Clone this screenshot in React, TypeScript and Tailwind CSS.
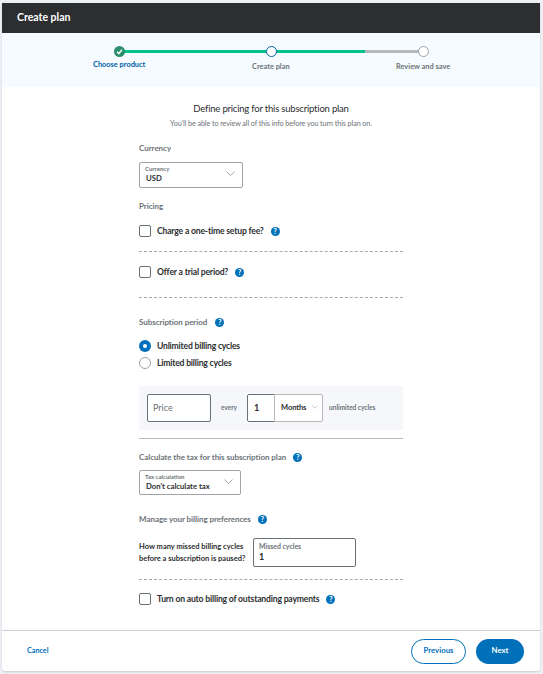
import React from 'react';

const font = "[font-family:Lato,'Noto_Sans',sans-serif]";

const Help = () => (
  <span className="inline-flex h-[9px] w-[9px] items-center justify-center rounded-full bg-[#0070ba] text-[7px] font-black leading-none text-white">?</span>
);

const Chevron = ({ className }: { className: string }) => (
  <svg className={className} viewBox="0 0 12 6" fill="none" stroke="#687173" strokeWidth="0.8">
    <path d="M0.5 0.5 L6 5.5 L11.5 0.5" />
  </svg>
);

const Checkbox = ({ label, className }: { label: string; className: string }) => (
  <div className={`flex items-center ${className}`}>
    <span className="h-3 w-3 rounded-[2px] border border-[#687173] bg-white" />
    <span className="ml-[6px] text-[8.6px] font-bold leading-3 tracking-[-0.18px] text-[#2c2e2f]">{label}</span>
    <span className="ml-[7px] flex"><Help /></span>
  </div>
);

const Dashed = ({ className }: { className: string }) => <div className={`border-t border-dashed border-[#a9a9a9] ${className}`} />;

const Label = ({ children, className }: { children: React.ReactNode; className: string }) => (
  <div className={`flex items-center text-[8px] font-bold leading-3 tracking-[-0.05px] text-[#6c7378] ${className}`}>{children}</div>
);

const SelectBox = ({ label, value, className }: { label: string; value: string; className: string }) => (
  <div className={`relative rounded-[2px] border border-[#9da3a6] bg-white pl-[5px] ${className}`}>
    <div className="mt-[1px] text-[6px] font-bold leading-[9px] text-[#6c7378]">{label}</div>
    <div className="pl-px text-[7.7px] font-bold leading-[11px] text-[#2c2e2f]">{value}</div>
    <Chevron className="absolute right-[7px] top-[8px] h-[5px] w-[9px]" />
  </div>
);

export default function App() {
  return (
    <div className={`h-[674px] w-[543px] overflow-hidden bg-[#eef0f6] pt-[3px] pl-[2px] ${font}`}>
      <div className="flex h-[668px] w-[538px] flex-col rounded-b-[3px] bg-white shadow-[0_1px_2px_rgba(0,0,0,0.15)]">
        <div className="flex h-[30px] items-center bg-[#2c2e2f] pl-[15px] text-[10.5px] font-bold text-white">Create plan</div>

        {/* Stepper */}
        <div className="h-[54px] bg-[#f5fbfe] pt-[13px]">
          <div className="relative ml-[71px] h-[12px] w-[350px]">
            <div className="absolute left-[46px] right-0 top-[4px] flex h-[3px] w-[304px]">
              <div className="w-[246px] bg-[#00c389]" />
              <div className="flex-1 bg-[#b5b7b8]" />
            </div>
            <span className="absolute left-[41px] top-0 flex h-[11px] w-[11px] items-center justify-center rounded-full bg-[#2a8f6c]">
              <svg className="h-[7px] w-[7px]" viewBox="0 0 10 10" fill="none" stroke="white" strokeWidth="2">
                <path d="M1.5 5.5 L4 8 L8.5 2.5" />
              </svg>
            </span>
            <span className="absolute left-[193px] top-0 h-[11px] w-[11px] rounded-full border-[1.5px] border-[#005ea6] bg-white" />
            <span className="absolute left-[345px] top-0 h-[11px] w-[11px] rounded-full border border-[#9da3a6] bg-white" />
          </div>
          <div className="relative h-[14px] text-[7.4px] font-bold leading-[11px]">
            <span className="absolute left-[91px] top-[1px] text-[#005ea6]">Choose product</span>
            <span className="absolute left-[250px] top-[3px] text-[#6c7378]">Create plan</span>
            <span className="absolute left-[394px] top-[3px] text-[#6c7378]">Review and save</span>
          </div>
        </div>

        <div className="flex-1">
          <div className="mt-[15px] text-center text-[9.5px] leading-[14px] tracking-[-0.2px] text-[#2c2e2f]">Define pricing for this subscription plan</div>
          <div className="mt-[2px] text-center text-[7.2px] leading-[11px] tracking-[-0.08px] text-[#6c7378]">You'll be able to review all of this info before you turn this plan on.</div>

          <div className="mx-auto w-[264px]">
            <Label className="mt-[13px]">Currency</Label>
            <SelectBox label="Currency" value="USD" className="mt-[8px] h-[26px] w-[104px]" />
            <Label className="mt-[12px]">Pricing</Label>
            <Checkbox label="Charge a one-time setup fee?" className="mt-[13px]" />
            <Dashed className="mt-[14px]" />
            <Checkbox label="Offer a trial period?" className="mt-[14px]" />
            <Dashed className="mt-[19px]" />

            <Label className="mt-[18px]">
              Subscription period
              <span className="ml-2 flex"><Help /></span>
            </Label>
            <div className="mt-[12px] flex h-[12px] items-center">
              <span className="flex h-3 w-3 items-center justify-center rounded-full bg-[#0070ba]">
                <span className="h-1 w-1 rounded-full bg-white" />
              </span>
              <span className="ml-[6px] text-[8.6px] font-bold tracking-[-0.2px] text-[#2c2e2f]">Unlimited billing cycles</span>
            </div>
            <div className="mt-[5px] flex h-[12px] items-center">
              <span className="h-3 w-3 rounded-full border border-[#9da3a6] bg-white" />
              <span className="ml-[6px] text-[8.6px] font-bold tracking-[-0.2px] text-[#2c2e2f]">Limited billing cycles</span>
            </div>

            <div className="mt-[17px] flex h-[44px] items-center bg-[#f5f7fa] pl-2">
              <div className="flex h-7 w-[64px] items-center rounded-[2px] border border-[#687173] bg-white pl-[5px] text-[9px] text-[#6c7378]">Price</div>
              <span className="ml-[10px] text-[6.5px] font-bold text-[#6c7378]">every</span>
              <div className="ml-[10px] flex h-7 w-[28px] items-center rounded-l-[2px] border border-[#687173] bg-white pl-[6px] text-[9px] font-bold text-[#2c2e2f]">1</div>
              <div className="relative -ml-px flex h-7 w-[49px] items-center rounded-r-[2px] border border-[#b5b7b8] bg-white pl-[6px] text-[7.5px] font-bold tracking-[-0.1px] text-[#2c2e2f]">
                Months
                <Chevron className="absolute right-[4px] top-[10px] h-[4px] w-[6px]" />
              </div>
              <span className="ml-[6px] text-[6.5px] font-bold text-[#6c7378]">unlimited cycles</span>
            </div>
            <div className="mt-[8px] border-t border-[#b5b7b8]" />

            <Label className="mt-[12px]">
              Calculate the tax for this subscription plan
              <span className="ml-[7px] flex"><Help /></span>
            </Label>
            <SelectBox label="Tax calculation" value="Don't calculate tax" className="mt-[7px] h-[25px] w-[102px]" />

            <Label className="mt-[18px]">
              Manage your billing preferences
              <span className="ml-[7px] flex"><Help /></span>
            </Label>
            <div className="mt-[13px] flex items-center">
              <div className="w-[114px] text-[7.5px] font-bold leading-3 text-[#2c2e2f]">
                How many missed billing cycles
                <br />
                before a subscription is paused?
              </div>
              <div className="h-[29px] w-[103px] rounded-[2px] border border-[#687173] bg-white pl-[5px]">
                <div className="mt-[2px] text-[6.9px] font-bold leading-[11px] text-[#6c7378]">Missed cycles</div>
                <div className="text-[9px] font-bold leading-[10px] text-[#2c2e2f]">1</div>
              </div>
            </div>
            <Dashed className="mt-[12px]" />
            <Checkbox label="Turn on auto billing of outstanding payments" className="mt-[13px]" />
          </div>
        </div>

        {/* Footer */}
        <div className="flex h-[41px] items-center border-t border-[#cbd2d6] pl-[25px] pr-[16px]">
          <span className="text-[7.2px] font-bold text-[#0070ba]">Cancel</span>
          <button className="ml-auto h-[25px] w-[55px] rounded-full border border-[#0070ba] bg-white text-[7.8px] font-bold text-[#0070ba]">Previous</button>
          <button className="ml-[10px] h-[25px] w-[48px] rounded-full bg-[#0070ba] text-[7.8px] font-bold text-white">Next</button>
        </div>
      </div>
    </div>
  );
}
